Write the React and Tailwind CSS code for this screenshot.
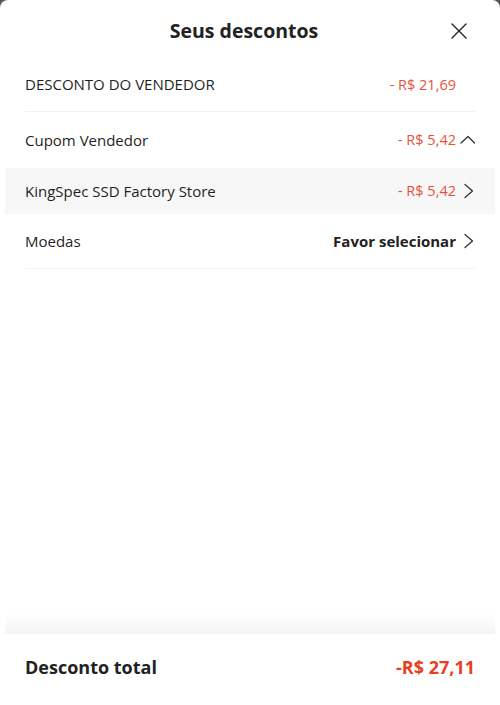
import React from 'react';

const ChevronRight = () => (
  <svg width="16" height="16" viewBox="0 0 16 16" fill="none" className="shrink-0">
    <path d="M6 1.5L13.5 8L6 14.5" stroke="#333" strokeWidth="1.3" strokeLinecap="round" strokeLinejoin="round" />
  </svg>
);

const ChevronUp = () => (
  <svg width="16" height="16" viewBox="0 0 16 16" fill="none" className="shrink-0">
    <path d="M2 11L9 4.5L15.5 11" stroke="#333" strokeWidth="1.3" strokeLinecap="round" strokeLinejoin="round" />
  </svg>
);

const Row = ({ label, value, icon, className = '', valueClass = 'text-[14.5px] text-[#e6533c]' }) => (
  <div className={`flex items-center justify-between px-5 ${className}`}>
    <span className="text-[15px] text-[#1f1f1f]">{label}</span>
    <div className="flex items-center gap-[3px]">
      <span className={valueClass}>{value}</span>
      {icon || <span className="w-4" />}
    </div>
  </div>
);

export default function App() {
  return (
    <div className="bg-[#555] min-h-[705px]" style={{ fontFamily: '"Open Sans", "Noto Sans", sans-serif' }}>
      <div className="bg-white rounded-t-lg min-h-[705px] flex flex-col">
        {/* Header */}
        <div className="relative h-[58px] flex items-center justify-center">
          <h1 className="text-[19.5px] font-bold text-[#222] translate-y-[2px] -translate-x-[6px]">Seus descontos</h1>
          <button className="absolute right-[33px] top-[23px]">
            <svg width="16" height="16" viewBox="0 0 16 16" fill="none">
              <path d="M1 1l14 14M15 1L1 15" stroke="#222" strokeWidth="1.4" strokeLinecap="round" />
            </svg>
          </button>
        </div>

        {/* Discounts */}
        <div className="flex-1 px-[5px]">
          <Row label="DESCONTO DO VENDEDOR" value="- R$ 21,69" className="h-[53px]" />
          <div className="mx-5 border-b border-[#f2f2f2]" />
          <Row label="Cupom Vendedor" value="- R$ 5,42" icon={<ChevronUp />} className="h-[56px]" />
          <Row label="KingSpec SSD Factory Store" value="- R$ 5,42" icon={<ChevronRight />} className="h-[46px] bg-[#f7f7f7]" />
          <Row
            label="Moedas"
            value="Favor selecionar"
            icon={<ChevronRight />}
            valueClass="text-[15px] font-bold text-[#222]"
            className="h-[54px]"
          />
          <div className="mx-5 border-b border-[#f2f2f2]" />
        </div>

        {/* Footer */}
        <div className="mx-[5px] h-5 bg-gradient-to-t from-[#f4f4f4] to-white" />
        <div className="h-[71px] flex items-center justify-between px-[25px] pb-1 bg-white">
          <span className="text-[18px] font-bold text-[#222]">Desconto total</span>
          <span className="text-[18px] font-bold text-[#e8401f]">-R$ 27,11</span>
        </div>
      </div>
    </div>
  );
}
